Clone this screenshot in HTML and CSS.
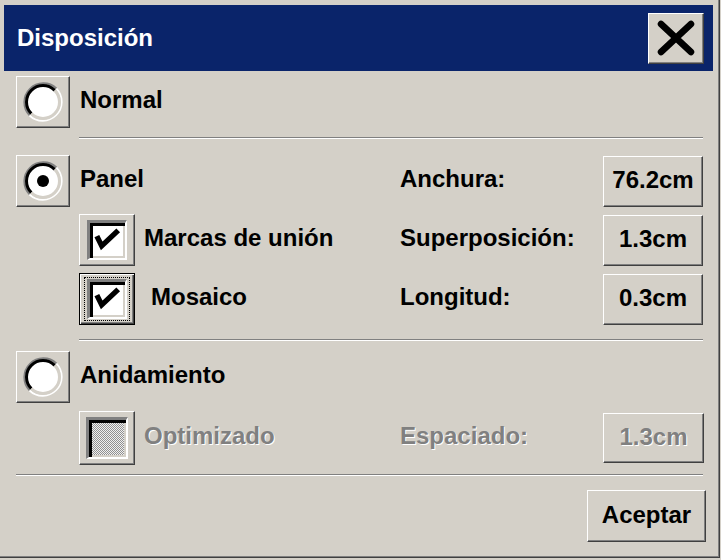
FILE: index.html
```html
<!DOCTYPE html>
<html lang="es">
<head>
<meta charset="utf-8">
<title>Disposición</title>
<link rel="stylesheet" href="styles.css">
</head>
<body>
<div class="window">
  <div class="titlebar">
    <span class="title">Disposición</span>
    <div class="close raised">
      <svg width="40" height="36" viewBox="0 0 40 36"><path d="M5 4 L35 32 M35 4 L5 32" stroke="#000" stroke-width="6.5" stroke-linecap="round" fill="none"/></svg>
    </div>
  </div>

  <div class="content">
    <div class="row row-first">
      <div class="radio raised">
        <svg width="40" height="40" viewBox="0 0 40 40">
          <circle cx="20" cy="20" r="16" fill="#fff"/>
          <path d="M33.43 6.57 A19 19 0 0 0 6.57 33.43" stroke="#808080" stroke-width="2" fill="none"/>
          <path d="M6.57 33.43 A19 19 0 0 0 33.43 6.57" stroke="#fff" stroke-width="2" fill="none"/>
          <path d="M31.67 8.33 A16.5 16.5 0 0 0 8.33 31.67" stroke="#000" stroke-width="3" fill="none"/>
          <path d="M8.33 31.67 A16.5 16.5 0 0 0 31.67 8.33" stroke="#d4d0c8" stroke-width="3" fill="none"/>
        </svg>
      </div>
      <span class="lbl">Normal</span>
    </div>

    <div class="sep sep-1"></div>

    <div class="row">
      <div class="radio raised">
        <svg width="40" height="40" viewBox="0 0 40 40">
          <circle cx="20" cy="20" r="16" fill="#fff"/>
          <path d="M33.43 6.57 A19 19 0 0 0 6.57 33.43" stroke="#808080" stroke-width="2" fill="none"/>
          <path d="M6.57 33.43 A19 19 0 0 0 33.43 6.57" stroke="#fff" stroke-width="2" fill="none"/>
          <path d="M31.67 8.33 A16.5 16.5 0 0 0 8.33 31.67" stroke="#000" stroke-width="3" fill="none"/>
          <path d="M8.33 31.67 A16.5 16.5 0 0 0 31.67 8.33" stroke="#d4d0c8" stroke-width="3" fill="none"/>
          <circle cx="20" cy="20" r="6" fill="#000"/>
        </svg>
      </div>
      <span class="lbl">Panel</span>
      <span class="lbl">Anchura:</span>
      <div class="val raised"><span class="vtext">76.2cm</span></div>
    </div>

    <div class="row row-gap">
      <span></span>
      <div class="opt">
        <div class="cb raised">
          <div class="cbin">
            <svg width="34" height="34" viewBox="0 0 34 34"><path d="M5 11 L10 21 L27 5" stroke="#000" stroke-width="5.5" fill="none" stroke-linejoin="miter"/></svg>
          </div>
        </div>
        <span class="lbl">Marcas de unión</span>
      </div>
      <span class="lbl">Superposición:</span>
      <div class="val raised"><span class="vtext">1.3cm</span></div>
    </div>

    <div class="row row-gap">
      <span></span>
      <div class="opt">
        <div class="cb cb-focus">
          <div class="focusring">
            <div class="cbin">
              <svg width="34" height="34" viewBox="0 0 34 34"><path d="M5 11 L10 21 L27 5" stroke="#000" stroke-width="5.5" fill="none" stroke-linejoin="miter"/></svg>
            </div>
          </div>
        </div>
        <span class="lbl lbl-mosaico">Mosaico</span>
      </div>
      <span class="lbl">Longitud:</span>
      <div class="val raised"><span class="vtext">0.3cm</span></div>
    </div>

    <div class="sep sep-2"></div>

    <div class="row">
      <div class="radio raised">
        <svg width="40" height="40" viewBox="0 0 40 40">
          <circle cx="20" cy="20" r="16" fill="#fff"/>
          <path d="M33.43 6.57 A19 19 0 0 0 6.57 33.43" stroke="#808080" stroke-width="2" fill="none"/>
          <path d="M6.57 33.43 A19 19 0 0 0 33.43 6.57" stroke="#fff" stroke-width="2" fill="none"/>
          <path d="M31.67 8.33 A16.5 16.5 0 0 0 8.33 31.67" stroke="#000" stroke-width="3" fill="none"/>
          <path d="M8.33 31.67 A16.5 16.5 0 0 0 31.67 8.33" stroke="#d4d0c8" stroke-width="3" fill="none"/>
        </svg>
      </div>
      <span class="lbl">Anidamiento</span>
    </div>

    <div class="row row-opt">
      <span></span>
      <div class="opt">
        <div class="cb cb-tall raised">
          <div class="cbin cbin-disabled"></div>
        </div>
        <span class="lbl disabled">Optimizado</span>
      </div>
      <span class="lbl disabled">Espaciado:</span>
      <div class="val val-short raised"><span class="vtext disabled">1.3cm</span></div>
    </div>

    <div class="sep sep-3"></div>

    <div class="footer">
      <div class="accept raised"><span class="vtext">Aceptar</span></div>
    </div>
  </div>
</div>
</body>
</html>
```

FILE: styles.css
```css
* {
  box-sizing: border-box;
}

html,
body {
  margin: 0;
  padding: 0;
}

body {
  width: 721px;
  height: 560px;
  overflow: hidden;
  background: #d4d0c8;
  font-family: "Liberation Sans", Arial, sans-serif;
  font-weight: bold;
  font-size: 24px;
  color: #000;
}

.window {
  width: 720px;
  height: 558px;
  padding-top: 5px;
  border-right: 1px solid #404040;
  border-bottom: 1px solid #404040;
  box-shadow: inset -1px -1px 0 #808080;
}

.raised {
  background: #d4d0c8;
  border-top: 1px solid #fff;
  border-left: 1px solid #fff;
  border-right: 1px solid #404040;
  border-bottom: 1px solid #404040;
  box-shadow: inset -1px -1px 0 #808080;
}

.titlebar {
  height: 66px;
  margin: 0 6px 0 4px;
  background: #0a246a;
  display: flex;
  align-items: center;
  justify-content: space-between;
  padding: 0 9px 0 13px;
}

.title {
  color: #fff;
  line-height: 28px;
}

.close {
  width: 56px;
  height: 51px;
  display: flex;
  align-items: center;
  justify-content: center;
  padding-bottom: 1px;
}

.close svg {
  display: block;
}

.content {
  padding: 5px 0 0 16px;
  width: 703px;
}

.row {
  display: grid;
  grid-template-columns: 63px 321px 203px 100px;
  align-items: center;
  height: 52px;
}

.row-first {
  height: 51px;
}

.row-gap {
  margin-top: 7px;
}

.row-opt {
  margin-top: 8px;
  height: 54px;
}

.lbl {
  line-height: 28px;
  padding-bottom: 5px;
  white-space: nowrap;
}

.row > .lbl:nth-child(2) {
  padding-left: 1px;
}

.lbl-mosaico {
  padding-left: 7px;
}

.disabled {
  color: #808080;
  text-shadow: 1px 1px 0 #fff;
}

.radio {
  width: 54px;
  height: 52px;
  display: flex;
  align-items: center;
  justify-content: center;
}

.radio svg {
  display: block;
}

.opt {
  display: flex;
  align-items: center;
  gap: 9px;
}

.cb {
  width: 56px;
  height: 52px;
  display: flex;
  align-items: center;
  justify-content: center;
  flex: none;
}

.cb-tall {
  height: 54px;
}

.cb-focus {
  background: #d4d0c8;
  border: 1px solid #000;
  box-shadow: inset 1px 1px 0 #fff, inset -1px -1px 0 #404040, inset -2px -2px 0 #808080;
}

.focusring {
  width: 46px;
  height: 44px;
  border: 1px dotted #000;
  display: flex;
  align-items: center;
  justify-content: center;
}

.cbin {
  width: 40px;
  height: 40px;
  border-top: 3px solid #808080;
  border-left: 3px solid #808080;
  border-right: 2px solid #fff;
  border-bottom: 2px solid #fff;
  background: #fff;
  box-shadow: inset 3px 3px 0 #000, inset -2px -2px 0 #d4d0c8;
  display: flex;
  align-items: center;
  justify-content: center;
}

.cbin svg {
  display: block;
  margin: 2px 0 0 2px;
}

.cbin-disabled {
  width: 42px;
  height: 42px;
  background: repeating-conic-gradient(#909090 0 25%, #f0f0f0 0 50%) 0 0 / 2px 2px;
}

.val {
  width: 100px;
  height: 51px;
  display: flex;
  align-items: center;
  justify-content: center;
}

.val-short {
  width: 101px;
  height: 50px;
}

.vtext {
  line-height: 28px;
  padding-bottom: 2px;
}

.sep {
  height: 2px;
  border-top: 1px solid #808080;
  border-bottom: 1px solid #fff;
}

.sep-1 {
  margin: 10px 0 16px 63px;
}

.sep-2 {
  margin: 14px 0 10px 63px;
}

.sep-3 {
  margin: 9px 0 0 0;
}

.footer {
  display: flex;
  justify-content: flex-end;
  margin-top: 14px;
  margin-right: -3px;
}

.accept {
  width: 119px;
  height: 52px;
  display: flex;
  align-items: center;
  justify-content: center;
}
```
